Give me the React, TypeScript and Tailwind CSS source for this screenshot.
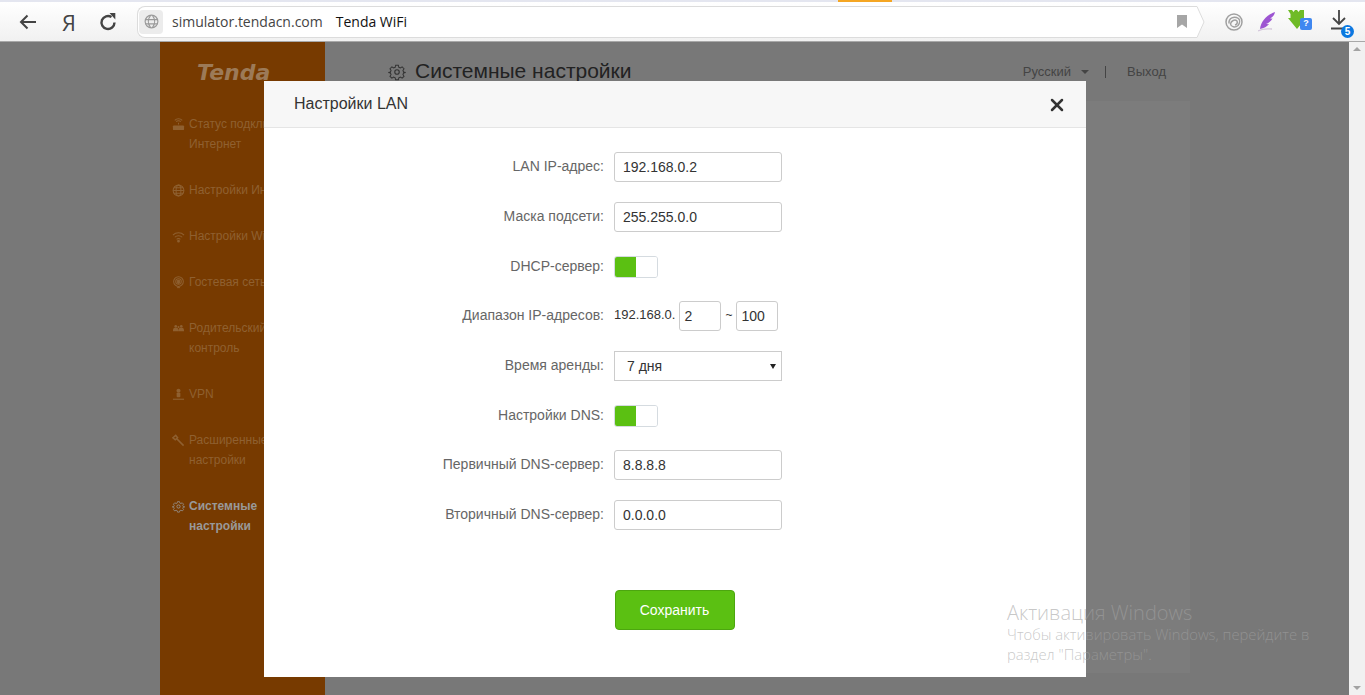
import React from "react";
import { X } from "lucide-react";

const Gear = ({ className }: { className: string }) => (
  <svg viewBox="0 0 24 24" fill="none" stroke="currentColor" strokeWidth="1.5" className={className}>
    <circle cx="12" cy="12" r="3" />
    <path d="M10 2h4l.7 3 2.3 1 2.6-1.600 2.800 2.800-1.600 2.600 1 2.300 3 .7v0l-3 .7-1 2.300 1.600 2.600-2.800 2.800-2.600-1.600-2.300 1-.7 3h-4l-.7-3-2.300-1-2.600 1.600-2.800-2.800 1.600-2.600-1-2.300-3-.7v0l3-.7 1-2.300-1.600-2.600 2.800-2.800L7 6l2.300-1z" transform="translate(1.2 1.2) scale(.9)" />
  </svg>
);

const navIcons: Record<string, React.ReactNode> = {
  router: (
    <svg viewBox="0 0 14 14" className="h-[13px] w-[13px]" fill="currentColor">
      <rect x="1" y="8" width="12" height="5" rx="1" />
      <path d="M7 7V5M4.500 4a3.500 3.500 0 0 1 5 0M3 2.500a5.600 5.600 0 0 1 8 0" stroke="currentColor" strokeWidth="1.100" fill="none" />
    </svg>
  ),
  globe: (
    <svg viewBox="0 0 14 14" className="h-[13px] w-[13px]" fill="none" stroke="currentColor" strokeWidth="1.100">
      <circle cx="7" cy="7" r="5.800" />
      <ellipse cx="7" cy="7" rx="2.600" ry="5.800" />
      <path d="M1.200 7h11.600M2 4h10M2 10h10" />
    </svg>
  ),
  wifi: (
    <svg viewBox="0 0 14 14" className="h-[13px] w-[13px]" fill="none" stroke="currentColor" strokeWidth="1.100">
      <path d="M1 5.500a8.500 8.500 0 0 1 12 0M3 7.800a5.600 5.600 0 0 1 8 0M5 10a2.800 2.800 0 0 1 4 0" />
      <circle cx="7" cy="12" r=".9" fill="currentColor" />
    </svg>
  ),
  guest: (
    <svg viewBox="0 0 14 14" className="h-[13px] w-[13px]" fill="none" stroke="currentColor" strokeWidth="1.100">
      <circle cx="7" cy="6" r="5.200" />
      <circle cx="7" cy="6" r="3" />
      <path d="M5.600 6a1.400 1.400 0 0 1 2.800 0c0 1-1.400 2-1.400 2.200S5.600 7 5.600 6z" fill="currentColor" />
      <path d="M5.500 12.500h3" />
    </svg>
  ),
  parent: (
    <svg viewBox="0 0 14 14" className="h-[13px] w-[13px]" fill="currentColor">
      <circle cx="4" cy="4.500" r="1.400" />
      <circle cx="10" cy="4.500" r="1.400" />
      <circle cx="7" cy="5.500" r="1.100" />
      <path d="M1 10c0-3 1-4 3-4s3 1 3 4zM7 10c0-3 1-4 3-4s3 1 3 4z" />
    </svg>
  ),
  vpn: (
    <svg viewBox="0 0 14 14" className="h-[13px] w-[13px]" fill="currentColor">
      <circle cx="7" cy="3" r="2.200" />
      <rect x="5" y="5" width="4" height="5" rx="1" />
      <rect x="1" y="11.500" width="12" height="1.200" />
    </svg>
  ),
  wrench: (
    <svg viewBox="0 0 14 14" className="h-[13px] w-[13px]" fill="none" stroke="currentColor" strokeWidth="1.600">
      <path d="M1 4 4 1.500l2 2.500-2.500 2.200zM5 5l7.500 7.500" />
    </svg>
  ),
};

const nav = [
  { icon: "router", lines: ["Статус подключения", "Интернет"] },
  { icon: "globe", lines: ["Настройки Интернета"] },
  { icon: "wifi", lines: ["Настройки WiFi"] },
  { icon: "guest", lines: ["Гостевая сеть"] },
  { icon: "parent", lines: ["Родительский", "контроль"] },
  { icon: "vpn", lines: ["VPN"] },
  { icon: "wrench", lines: ["Расширенные", "настройки"] },
];

const Row = ({ label, short, children }: { label: string; short?: boolean; children: React.ReactNode }) => (
  <div className={short ? "flex h-[29px] items-center" : "flex h-[30px] items-center"}>
    <label className="w-[350px] pb-[2px] pr-[10px] text-right text-sm text-[#666]">{label}</label>
    {children}
  </div>
);

const Field = ({ value }: { value: string }) => (
  <input
    readOnly
    value={value}
    className="h-[30px] w-[168px] rounded-[3px] border border-[#ccc] px-2 text-sm text-[#333] outline-none"
  />
);

const Toggle = () => (
  <div className="flex h-[22px] w-[44px] overflow-hidden rounded-[3px] border border-[#d5dbe0]">
    <div className="w-[21px] bg-[#5bc012]" />
    <div className="flex-1 bg-white" />
  </div>
);

export default function App() {
  return (
    <div className="flex h-[695px] flex-col overflow-hidden font-['Liberation_Sans',Arial,sans-serif]">
      {/* browser bar */}
      <div className="relative flex h-[42px] shrink-0 items-center border-b border-t-2 border-b-[#a8a8a8] border-t-[#e4e6f0] bg-gradient-to-b from-white to-[#f1f1f1]">
        <div className="absolute left-[838px] top-[-2px] h-[2px] w-[54px] bg-[#f5a623]" />
        <div className="flex w-[137px] items-center text-[#444]">
          <svg viewBox="0 0 20 20" className="ml-[18px] h-5 w-5" fill="none" stroke="currentColor" strokeWidth="2">
            <path d="M18 10H3M9.500 3.500 3 10l6.500 6.500" />
          </svg>
          <span className="ml-[20px] w-[22px] text-center font-['Open_Sans',sans-serif] text-[22px] leading-none">Я</span>
          <svg viewBox="0 0 20 20" className="ml-[18px] h-5 w-5" fill="none" stroke="currentColor" strokeWidth="2.400">
            <path d="M16.500 10.500a6.500 6.500 0 1 1-3-5.500" />
            <path d="M11.500 1h5.800v6.600z" fill="currentColor" stroke="none" />
          </svg>
        </div>
        <div className="flex h-[32px] w-[1058px] items-center rounded-l-lg border border-r-0 border-[#dcdcdc] bg-white pl-[1px] pr-[8px] font-['Open_Sans',sans-serif] text-sm">
          <div className="flex h-6 w-6 items-center justify-center rounded-sm bg-[#ececec] text-[#999]">
            <svg viewBox="0 0 16 16" className="h-[15px] w-[15px]" fill="none" stroke="currentColor" strokeWidth="1.200">
              <circle cx="8" cy="8" r="6.800" />
              <path d="M1.500 6h13M1.500 10.500h13M7 1.500c-3 4-3 9 0 13M9 1.500c3 4 3 9 0 13" />
            </svg>
          </div>
          <span className="ml-[9px] text-[#444]">simulator.tendacn.com</span>
          <span className="ml-[13px] text-[#111]">Tenda WiFi</span>
          <svg viewBox="0 0 10 13" className="ml-auto h-[13px] w-[10px]" fill="#a6a6a6">
            <path d="M0 0h10v13L5 9.500 0 13z" />
          </svg>
        </div>
        <svg viewBox="0 0 10 32" className="h-[32px] w-[10px]" fill="#fff" stroke="#dcdcdc">
          <path d="M0 .5h2L9 16 2 31.500H0" />
        </svg>
        <div className="ml-[20px] flex items-center">
          <svg viewBox="0 0 18 18" className="h-[18px] w-[18px]" fill="none" stroke="#a0a0a0" strokeWidth="1.500">
            <circle cx="9" cy="9" r="8" />
            <path d="M4 10.500C3.500 5 9 2.500 13.500 5.500 15 7 15 10 13 12.500 10 15 6 14 5.500 11 6 7.500 10 6 12 8c.8 1.500 0 3.500-2 4" />
          </svg>
          <svg viewBox="0 0 18 20" className="ml-[15px] h-5 w-[18px]">
            <path d="M17 0C9 3 3 9 2 17c4-.5 7-2.500 9-5-1 .2-2 .2-3 0 3-1 5-3 6.500-5.500-1 .2-2 .2-2.500 0C15 5 16.500 3 17 0z" fill="#9d55d2" />
            <path d="M0 19c5-3 10-2 14-2" stroke="#d5c8dc" strokeWidth="1.400" fill="none" />
          </svg>
          <div className="relative ml-[12px] h-6 w-6">
            <svg viewBox="0 0 18 19" className="h-[19px] w-[18px]" fill="#6fbb26">
              <path d="M0 0h4l1.500 2L7 0h2l1.500 2L12 0h4v8h2l-9 11L0 8h2.500V4z" />
            </svg>
            <span className="absolute right-0 top-[8px] flex h-[12px] w-[12px] items-center justify-center rounded-[2px] bg-[#3f87f0] text-[9px] font-bold text-white">?</span>
          </div>
          <div className="relative ml-[19px] h-6 w-6">
            <svg viewBox="0 0 16 20" className="h-5 w-4" fill="none" stroke="#444" strokeWidth="1.800">
              <path d="M8 0v13M2 8l6 6 6-6M0 18.500h13" />
            </svg>
            <span className="absolute right-[1px] top-[15px] flex h-[13px] w-[13px] items-center justify-center rounded-full bg-[#0b78e0] text-[10px] font-bold text-white">5</span>
          </div>
        </div>
      </div>

      {/* dimmed page */}
      <div className="relative flex flex-1 bg-[#787878]">
        <div className="ml-[160px] flex w-[165px] flex-col bg-[#773a00] text-xs text-[#8f6030]">
          <div className="flex h-[60px] items-center pl-[37px] pt-[1px] font-['DejaVu_Sans',sans-serif] text-[22px] font-bold italic text-[#9c7a58]">
            Tenda
          </div>
          <div className="flex flex-col gap-[26px] pl-[12px] pt-[12px]">
            {nav.map((item) => (
              <div key={item.lines[0]} className="flex leading-[20px]">
                <span className="flex h-5 w-[17px] shrink-0 items-center">{navIcons[item.icon]}</span>
                <div className="whitespace-nowrap">
                  {item.lines.map((line) => (
                    <div key={line}>{line}</div>
                  ))}
                </div>
              </div>
            ))}
            <div className="flex font-bold leading-[20px] text-[#999]">
              <span className="flex h-5 w-[17px] shrink-0 items-center">
                <Gear className="h-[13px] w-[13px]" />
              </span>
              <div>
                <div>Системные</div>
                <div>настройки</div>
              </div>
            </div>
          </div>
        </div>

        <div className="flex w-[865px] flex-col">
          <div className="flex h-[59px] items-center pl-[63px] pr-[24px] pt-[1px]">
            <Gear className="mr-[9px] h-[18px] w-[18px] text-[#333]" />
            <span className="pb-[2px] text-[21px] text-[#222]">Системные настройки</span>
            <span className="ml-auto text-[13px] text-[#444]">Русский</span>
            <span className="ml-[10px] h-0 w-0 border-x-4 border-t-4 border-x-transparent border-t-[#444]" />
            <span className="ml-[16px] mr-[21px] h-[12px] w-px bg-[#444]" />
            <span className="text-[13px] text-[#444]">Выход</span>
          </div>
          <div className="mb-[22px] ml-[24px] flex-1 bg-[#7c7c7c]" />
        </div>

        <div className="ml-auto flex w-4 flex-col items-center justify-between bg-[#f1f1f1] py-[5px]">
          <span className="h-0 w-0 border-x-4 border-b-4 border-x-transparent border-b-[#a3a3a3]" />
          <span className="h-0 w-0 border-x-4 border-t-4 border-x-transparent border-t-[#a3a3a3]" />
        </div>

        {/* LAN modal */}
        <div className="absolute left-[264px] top-[39px] flex h-[596px] w-[822px] flex-col bg-white">
          <div className="flex h-[47px] shrink-0 items-center justify-between border-b border-[#e5e5e5] bg-[#f7f7f7] pl-[30px] pr-[19px]">
            <span className="text-base text-[#333]">Настройки LAN</span>
            <X className="mt-[2px] h-5 w-5 text-[#333]" strokeWidth={3} />
          </div>
          <div className="flex flex-col gap-5 pt-[24px]">
            <Row label="LAN IP-адрес:">
              <Field value="192.168.0.2" />
            </Row>
            <Row label="Маска подсети:">
              <Field value="255.255.0.0" />
            </Row>
            <Row label="DHCP-сервер:" short>
              <Toggle />
            </Row>
            <Row label="Диапазон IP-адресов:">
              <span className="pb-[3px] text-[13px] text-[#333]">192.168.0.</span>
              <input
                readOnly
                value="2"
                className="ml-[4px] h-[30px] w-[42px] rounded-[3px] border border-[#ccc] px-1 text-sm text-[#333] outline-none"
              />
              <span className="mx-[4px] pb-[3px] text-xs text-[#333]">~</span>
              <input
                readOnly
                value="100"
                className="h-[30px] w-[42px] rounded-[3px] border border-[#ccc] px-1 text-sm text-[#333] outline-none"
              />
            </Row>
            <Row label="Время аренды:">
              <div className="flex h-[30px] w-[168px] items-center justify-between border border-[#ccc] pl-3 pr-[5px] text-sm text-[#333]">
                7 дня
                <span className="h-0 w-0 border-x-[3px] border-t-[5px] border-x-transparent border-t-[#222]" />
              </div>
            </Row>
            <Row label="Настройки DNS:" short>
              <Toggle />
            </Row>
            <Row label="Первичный DNS-сервер:">
              <Field value="8.8.8.8" />
            </Row>
            <Row label="Вторичный DNS-сервер:">
              <Field value="0.0.0.0" />
            </Row>
          </div>
          <div className="mt-[60px] flex justify-center pr-[1px]">
            <button className="h-10 w-[120px] rounded-[4px] border border-[#4ca60f] bg-[#5bc012] text-sm text-white">
              Сохранить
            </button>
          </div>
        </div>

        {/* windows watermark */}
        <div className="absolute left-[1007px] top-[558px] w-[340px] font-['Open_Sans',sans-serif] font-light text-[#a3a3a3]/60">
          <div className="text-[20px] leading-[26px]">Активация Windows</div>
          <div className="-mt-[2px] text-[14.8px] leading-[20px]">
            Чтобы активировать Windows, перейдите в
            <br />
            раздел "Параметры".
          </div>
        </div>
      </div>
    </div>
  );
}
